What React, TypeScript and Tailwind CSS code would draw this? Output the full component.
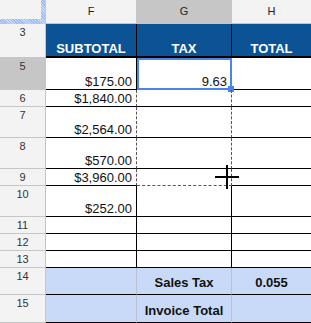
import React from 'react';

const GRID = 'grid grid-cols-[46px_91px_95px_79px]';

const hatch =
  'bg-[repeating-linear-gradient(45deg,#9dbcf2_0px,#9dbcf2_1px,#c8daf9_1px,#c8daf9_2px)]';

function RowHead({ n, active }: { n: string; active?: boolean }) {
  return (
    <div
      className={`border-r border-b border-[#c6c6c6] pt-[2px] text-center text-[11px] font-normal leading-[13px] text-[#333] ${
        active ? 'bg-[#c6c6c6]' : 'bg-[#f3f3f3]'
      }`}
    >
      {n}
    </div>
  );
}

interface RowProps {
  n: string;
  height: string;
  f?: string;
  g?: string;
  ants?: boolean;
  antsEnd?: boolean;
  active?: boolean;
}

function DataRow({ n, height, f, g, ants, antsEnd, active }: RowProps) {
  const dash = ants ? '[border-right-style:dashed] border-r-[#555]' : '';
  const dashBottom = antsEnd ? '[border-bottom-style:dashed] border-b-[#555]' : '';
  return (
    <div className={`${GRID} ${height}`}>
      <RowHead n={n} active={active} />
      <div className={`flex items-end justify-end border-r border-b border-black pr-[4px] ${dash}`}>
        {f}
      </div>
      <div className={`relative flex items-end justify-end border-r border-b border-black pr-[4px] ${dash} ${dashBottom}`}>
        {g}
        {active && (
          <div className="absolute left-0 top-0 -right-px -bottom-px border-2 border-[#4a86e8]">
            <div className="absolute -right-[4px] -bottom-[4px] h-[6px] w-[6px] bg-[#4a86e8]" />
          </div>
        )}
      </div>
      <div className="border-b border-black" />
    </div>
  );
}

export default function App() {
  return (
    <div
      className="relative h-[323px] w-[311px] overflow-hidden bg-white text-[13px] leading-[15px] text-[#111]"
      style={{ fontFamily: '"Liberation Sans", Arial, sans-serif' }}
    >
      {/* column letters */}
      <div className={`${GRID} h-[24px] text-[11px] leading-[13px] text-[#222]`}>
        <div className="flex flex-col border-r border-[#c6c6c6] bg-[#f3f3f3]">
          <div className="flex flex-1">
            <div className="flex-1" />
            <div className={`w-[4px] ${hatch}`} />
          </div>
          <div className={`h-[5px] ${hatch}`} />
        </div>
        <div className="flex items-center justify-center border-r border-b border-[#c6c6c6] bg-[#f3f3f3]">F</div>
        <div className="flex items-center justify-center border-r border-b border-[#c6c6c6] bg-[#c6c6c6]">G</div>
        <div className="flex items-center justify-center border-b border-[#c6c6c6] bg-[#f3f3f3]">H</div>
      </div>

      {/* header row 3 */}
      <div className={`${GRID} h-[34px] font-bold text-white`}>
        <RowHead n="3" />
        <div className="flex items-end justify-center border-r border-b-2 border-black bg-[#0b5394]">SUBTOTAL</div>
        <div className="flex items-end justify-center border-r border-b-2 border-black bg-[#0b5394]">TAX</div>
        <div className="flex items-end justify-center border-b-2 border-black bg-[#0b5394]">TOTAL</div>
      </div>

      <DataRow n="5" height="h-[32px]" f="$175.00" g="9.63" active />
      <DataRow n="6" height="h-[17px]" f="$1,840.00" ants />
      <DataRow n="7" height="h-[31px]" f="$2,564.00" ants />
      <DataRow n="8" height="h-[31px]" f="$570.00" ants />
      <DataRow n="9" height="h-[17px]" f="$3,960.00" ants antsEnd />
      <DataRow n="10" height="h-[31px]" f="$252.00" />
      <DataRow n="11" height="h-[17px]" />
      <DataRow n="12" height="h-[17px]" />
      <DataRow n="13" height="h-[17px]" />

      {/* totals */}
      <div className={`${GRID} h-[27px] font-bold`}>
        <RowHead n="14" />
        <div className="border-r border-b border-r-[#b9c3d3] border-b-black bg-[#c9daf8]" />
        <div className="flex items-end justify-center border-r border-b border-r-[#b9c3d3] border-b-black bg-[#c9daf8] pb-[4px]">
          Sales Tax
        </div>
        <div className="flex items-end justify-center border-b border-black bg-[#c9daf8] pb-[4px]">0.055</div>
      </div>
      <div className={`${GRID} h-[28px] font-bold`}>
        <RowHead n="15" />
        <div className="border-r border-b border-r-[#b9c3d3] border-b-black bg-[#c9daf8]" />
        <div className="flex items-end justify-center border-r border-b border-r-[#b9c3d3] border-b-black bg-[#c9daf8] pb-[4px]">
          Invoice Total
        </div>
        <div className="border-b border-black bg-[#c9daf8]" />
      </div>

      {/* crosshair cursor */}
      <svg className="absolute left-[214px] top-[164px]" width="26" height="26" viewBox="0 0 26 26">
        <path d="M13 1V25M1 13H25" stroke="#000" strokeWidth="2" />
      </svg>
    </div>
  );
}
